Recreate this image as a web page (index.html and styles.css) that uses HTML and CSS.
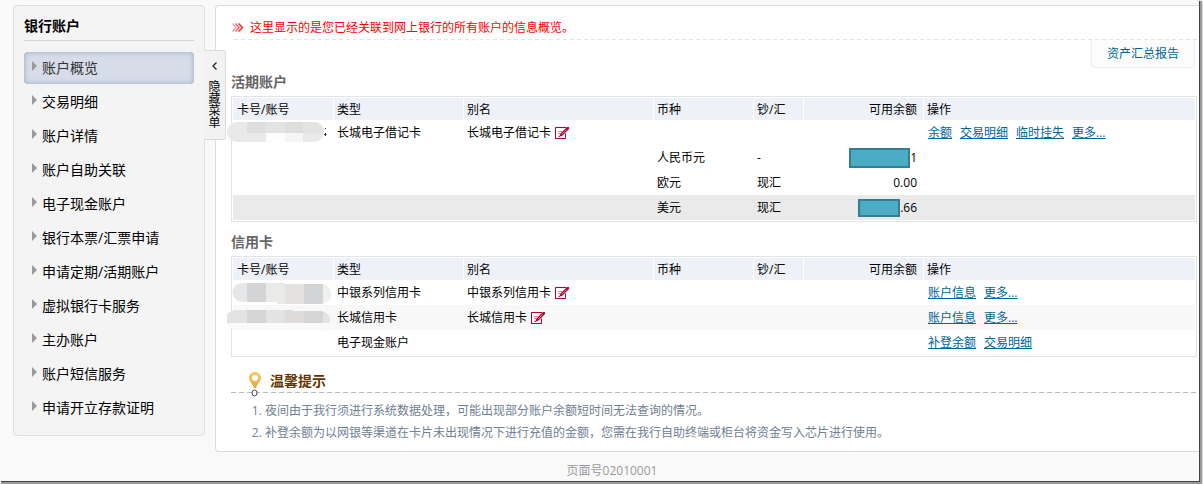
FILE: index.html
```html
<!DOCTYPE html>
<html lang="zh-CN">
<head>
<meta charset="utf-8">
<title>账户概览</title>
<link rel="stylesheet" href="styles.css">
</head>
<body>
<svg class="defs" width="0" height="0" aria-hidden="true">
  <symbol id="edit" viewBox="0 0 14 12">
    <path d="M11 .5H.5V11.500M0 11.500H10.500V6.500" fill="none" stroke="#b5002e"/>
    <path d="M3 4.500H7M3 6.500H5M3 9.500H5" stroke="#e07f95"/>
    <path d="M4 10L5.500 6.500L12 0H14V2L7.500 8.500Z" fill="#b5002e"/>
    <path d="M7 7L11.500 2.500" stroke="#e8a0b0" stroke-width=".7"/>
  </symbol>
</svg>
<div class="window">
  <div class="layout">
    <aside class="sidebar">
      <h2 class="sidebar-title">银行账户</h2>
      <nav class="menu">
        <a class="menu-item active" href="#">账户概览</a>
        <a class="menu-item" href="#">交易明细</a>
        <a class="menu-item" href="#">账户详情</a>
        <a class="menu-item" href="#">账户自助关联</a>
        <a class="menu-item" href="#">电子现金账户</a>
        <a class="menu-item" href="#">银行本票/汇票申请</a>
        <a class="menu-item" href="#">申请定期/活期账户</a>
        <a class="menu-item" href="#">虚拟银行卡服务</a>
        <a class="menu-item" href="#">主办账户</a>
        <a class="menu-item" href="#">账户短信服务</a>
        <a class="menu-item" href="#">申请开立存款证明</a>
      </nav>
      <button class="collapse" type="button">
        <svg width="5" height="8" viewBox="0 0 5 8" aria-hidden="true"><path d="M4.500 .5L1 4L4.500 7.500" fill="none" stroke="#222" stroke-width="1.300"/></svg>
        <span class="collapse-text">隐藏菜单</span>
      </button>
    </aside>
    <main class="content">
      <p class="notice">
        <svg width="12" height="9" viewBox="0 0 12 9" aria-hidden="true"><g fill="none" stroke-width="1.500"><path d="M.5 .5L4 4.500L.5 8.500" stroke="#f8a5a5"/><path d="M3.500 .5L7 4.500L3.500 8.500" stroke="#f27070"/><path d="M6.500 .5L10.500 4.500L6.500 8.500" stroke="#e83030"/></g></svg>
        <span>这里显示的是您已经关联到网上银行的所有账户的信息概览。</span>
      </p>
      <div class="toolbar"><a class="report" href="#">资产汇总报告</a></div>

      <h3 class="section-title">活期账户</h3>
      <div class="table-box">
        <table class="accounts">
          <colgroup><col class="c-card"><col class="c-type"><col class="c-alias"><col class="c-cur"><col class="c-cash"><col class="c-bal"><col></colgroup>
          <thead><tr><th>卡号/账号</th><th>类型</th><th>别名</th><th>币种</th><th>钞/汇</th><th class="num">可用余额</th><th>操作</th></tr></thead>
          <tbody>
            <tr>
              <td class="masked"><svg class="smudge" width="100" height="22" viewBox="0 0 100 22" aria-hidden="true">
                <clipPath id="m1"><rect x="0" y="1" width="97" height="20" rx="10"/></clipPath>
                <g clip-path="url(#m1)"><path fill="#e9e9e9" d="M0 0H100V22H0z"/><path fill="#dddee0" d="M20 0H39V12H20zM58 0H76V12H58z"/><path fill="#e3e3e4" d="M39 0H58V12H39zM76 0H100V12H76z"/><path fill="#fdfdfd" d="M39 12H58V22H39z"/><path fill="#f6f6f6" d="M58 12H76V22H58z"/></g>
                <path d="M98 7.500H99M97 13.500H99.500M98.500 12V15" stroke="#333" fill="none"/>
              </svg></td>
              <td>长城电子借记卡</td>
              <td><span class="alias">长城电子借记卡<svg width="14" height="12" role="img" aria-label="编辑"><use href="#edit"/></svg></span></td>
              <td></td><td></td><td></td>
              <td><div class="actions"><a href="#">余额</a><a href="#">交易明细</a><a href="#">临时挂失</a><a href="#">更多...</a></div></td>
            </tr>
            <tr><td></td><td></td><td></td><td>人民币元</td><td>-</td><td class="num"><span class="amount"><span class="cover wide"></span>1</span></td><td></td></tr>
            <tr><td></td><td></td><td></td><td>欧元</td><td>现汇</td><td class="num">0.00</td><td></td></tr>
            <tr class="hover"><td></td><td></td><td></td><td>美元</td><td>现汇</td><td class="num"><span class="amount"><span class="cover"></span>.66</span></td><td></td></tr>
          </tbody>
        </table>
      </div>

      <h3 class="section-title">信用卡</h3>
      <div class="table-box">
        <table class="accounts">
          <colgroup><col class="c-card"><col class="c-type"><col class="c-alias"><col class="c-cur"><col class="c-cash"><col class="c-bal"><col></colgroup>
          <thead><tr><th>卡号/账号</th><th>类型</th><th>别名</th><th>币种</th><th>钞/汇</th><th class="num">可用余额</th><th>操作</th></tr></thead>
          <tbody>
            <tr>
              <td class="masked"><svg class="smudge" width="106" height="24" viewBox="0 0 106 24" aria-hidden="true">
                <clipPath id="m2"><path d="M15 2H58V3H94A10 10 0 0 1 94 23H50V21H15A9.500 9.500 0 0 1 15 2z"/></clipPath>
                <g clip-path="url(#m2)"><path fill="#e6e7e8" d="M0 0H106V24H0z"/><path fill="#d3d4d6" d="M20 0H39V24H20zM77 0H96V24H77z"/><path fill="#eaeae9" d="M39 3H58V24H39z"/><path fill="#e4e2e0" d="M58 3H77V24H58z"/><path fill="#eef1f2" d="M96 0H106V24H96z"/></g>
              </svg></td>
              <td>中银系列信用卡</td>
              <td><span class="alias">中银系列信用卡<svg width="14" height="12" role="img" aria-label="编辑"><use href="#edit"/></svg></span></td>
              <td></td><td></td><td></td>
              <td><div class="actions"><a href="#">账户信息</a><a href="#">更多...</a></div></td>
            </tr>
            <tr class="alt">
              <td class="masked"><svg class="smudge" width="106" height="24" viewBox="0 0 106 24" aria-hidden="true">
                <clipPath id="m3"><path d="M8 4H66V5H94A9 9 0 0 1 94 23H8A9.500 9.500 0 0 1 8 4z"/></clipPath>
                <g clip-path="url(#m3)"><path fill="#fafafa" d="M0 0H106V24H0z"/><path fill="#e3e3e3" d="M0 4H20V17H0zM39 4H58V17H39zM96 4H106V17H96z"/><path fill="#d5d5d6" d="M20 4H39V17H20zM77 4H96V17H77z"/><path fill="#dedcdb" d="M58 4H77V17H58z"/></g>
              </svg></td>
              <td>长城信用卡</td>
              <td><span class="alias">长城信用卡<svg width="14" height="12" role="img" aria-label="编辑"><use href="#edit"/></svg></span></td>
              <td></td><td></td><td></td>
              <td><div class="actions"><a href="#">账户信息</a><a href="#">更多...</a></div></td>
            </tr>
            <tr><td></td><td>电子现金账户</td><td></td><td></td><td></td><td></td><td><div class="actions"><a href="#">补登余额</a><a href="#">交易明细</a></div></td></tr>
          </tbody>
        </table>
      </div>

      <section class="tips">
        <h3 class="tips-title">
          <svg width="14" height="26" viewBox="0 0 14 26" aria-hidden="true"><defs><linearGradient id="pin" x2="0" y2="1"><stop stop-color="#f9cd68"/><stop offset="1" stop-color="#e5a63c"/></linearGradient></defs><path d="M7 1C3.500 1 1 3.500 1 6.800C1 10.500 4.500 12.500 6 17H8C9.500 12.500 13 10.500 13 6.800C13 3.500 10.500 1 7 1Z" fill="url(#pin)"/><circle cx="7" cy="7" r="3" fill="#fff"/><ellipse cx="6.500" cy="22" rx="2.500" ry="3" fill="#fff" stroke="#444"/></svg>
          <span>温馨提示</span>
        </h3>
        <ol class="tips-list">
          <li>夜间由于我行须进行系统数据处理，可能出现部分账户余额短时间无法查询的情况。</li>
          <li>补登余额为以网银等渠道在卡片未出现情况下进行充值的金额，您需在我行自助终端或柜台将资金写入芯片进行使用。</li>
        </ol>
      </section>
    </main>
  </div>
  <footer class="footer">页面号02010001</footer>
</div>
</body>
</html>
```
FILE: styles.css
```css
* { box-sizing: border-box; }
body {
  margin: 0;
  background: #fff;
  color: #000;
  font: 12px/20px "Open Sans", "Noto Sans CJK SC", sans-serif;
}
h2, h3, p, ol { margin: 0; padding: 0; }
a { color: #069; }
.defs { position: absolute; }
.window {
  margin: 0 4px 4px 0;
  background: #f9f9f9;
  box-shadow: 1px 1px 0 #444, 2px 2px 1px 1px #999, 3px 3px 2px #bbb;
}
.layout { display: flex; align-items: flex-start; gap: 10px; padding: 5px 0 0 13px; }

.sidebar {
  position: relative;
  flex: 0 0 192px;
  padding: 10px 10px 11px;
  border: 1px solid #dfdfdf;
  border-radius: 4px;
  background: #f4f4f4;
}
.sidebar-title {
  padding-bottom: 4px;
  border-bottom: 1px solid #d4d4d4;
  font-size: 14px;
  line-height: 20px;
}
.menu { display: flex; flex-direction: column; gap: 2px; margin-top: 11px; }
.menu-item {
  display: flex;
  align-items: center;
  gap: 5px;
  height: 32px;
  padding-left: 8px;
  border-radius: 4px;
  color: #000;
  font-size: 14px;
  text-decoration: none;
}
.menu-item::before {
  content: "";
  margin-bottom: 4px;
  border: solid transparent;
  border-width: 5px 0 5px 5px;
  border-left-color: #999;
}
.menu-item.active { background: #d6dce8; color: #333; box-shadow: inset 0 0 4px 1px #a9b4c4; }
.collapse {
  position: absolute;
  top: 44px;
  left: 100%;
  display: flex;
  flex-direction: column;
  align-items: center;
  gap: 10px;
  width: 22px;
  height: 90px;
  padding: 11px 0 0;
  border: 1px solid #dcdcdc;
  border-left: 0;
  border-radius: 0 3px 3px 0;
  background: #f2f2f2;
  color: #000;
  font: 12px/12px "Noto Sans CJK SC", sans-serif;
}
.collapse-text { width: 12px; overflow-wrap: anywhere; }

.content {
  flex: 1;
  min-width: 0;
  padding: 11px 2px 7px 15px;
  border: 1px solid #dcdcdc;
  border-right: 0;
  border-radius: 4px 0 0 4px;
  background: #fff;
}
.notice {
  display: flex;
  align-items: center;
  gap: 6px;
  height: 23px;
  padding: 0 0 2px 1px;
  background: repeating-linear-gradient(90deg, transparent 0 3px, #e4e4e4 3px 7px) 0 100% / 100% 1px no-repeat;
  color: #f00;
}
.toolbar { display: flex; justify-content: flex-end; padding-right: 2px; }
.report {
  width: 104px;
  padding: 4px 0 3px;
  border: 1px solid #eee;
  border-top: 0;
  border-radius: 0 0 4px 4px;
  background: #fcfcfc;
  text-align: center;
  text-decoration: none;
}
.section-title {
  margin: 10px 0 4px;
  color: #666;
  font-size: 14px;
  line-height: 20px;
}
.toolbar + .section-title { margin-top: 4px; }
.table-box { padding: 1px; border: 1px solid #e3e3e3; }
.accounts { width: 100%; table-layout: fixed; border-collapse: separate; border-spacing: 0; }
.c-card, .c-cur { width: 100px; }
.c-type { width: 130px; }
.c-alias { width: 190px; }
.c-cash { width: 50px; }
.c-bal { width: 120px; }
.accounts th, .accounts td { padding: 0 4px; white-space: nowrap; }
.accounts th { height: 22px; padding-top: 2px; background: #eef2f8; font-weight: 400; text-align: left; }
.accounts th + th { padding-left: 3px; border-left: 1px solid #fff; }
.accounts td { height: 25px; }
.accounts .num { padding-right: 6px; text-align: right; }
.hover { background: #eaeaea; }
.alt { background: #f8f8f8; }
.alias { display: flex; align-items: center; gap: 4px; }
.actions { display: flex; gap: 8px; padding-left: 1px; }
.masked { position: relative; }
.smudge { position: absolute; top: 1px; left: -6px; }
.amount { display: flex; justify-content: flex-end; align-items: center; }
.cover {
  width: 42px;
  height: 18px;
  border: 2px solid #357d91;
  background: #4bacc6;
}
.cover.wide { width: 61px; height: 20px; }

.tips-title {
  display: flex;
  gap: 8px;
  height: 22px;
  margin-top: 14px;
  padding-left: 17px;
  background: repeating-linear-gradient(90deg, #bbb 0 5px, transparent 5px 8px) 0 100% / 100% 1px no-repeat;
  color: #630;
  font-size: 14px;
}
.tips-title svg { flex: none; }
.tips-list {
  padding: 7px 0 0 34px;
  color: #708090;
  line-height: 22px;
}
.footer { padding: 9px 0 0 25px; height: 29px; color: #999; text-align: center; }
```
